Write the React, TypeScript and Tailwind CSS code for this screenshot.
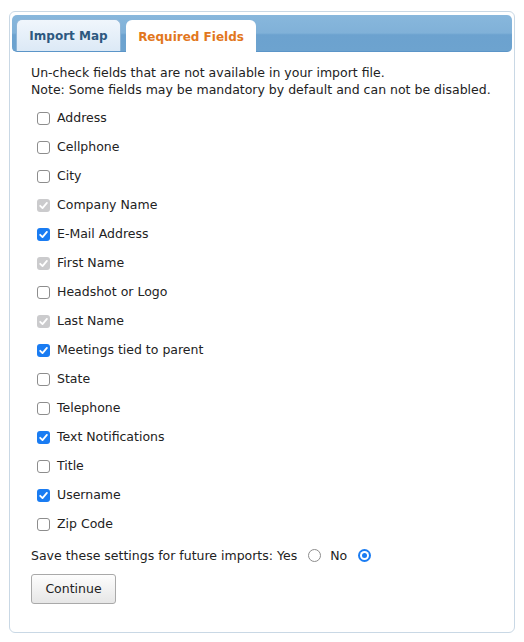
import React from "react";

type State = "off" | "on" | "locked";

const fields: [string, State][] = [
  ["Address", "off"],
  ["Cellphone", "off"],
  ["City", "off"],
  ["Company Name", "locked"],
  ["E-Mail Address", "on"],
  ["First Name", "locked"],
  ["Headshot or Logo", "off"],
  ["Last Name", "locked"],
  ["Meetings tied to parent", "on"],
  ["State", "off"],
  ["Telephone", "off"],
  ["Text Notifications", "on"],
  ["Title", "off"],
  ["Username", "on"],
  ["Zip Code", "off"],
];

function Check() {
  return (
    <svg viewBox="0 0 13 13" className="w-[13px] h-[13px]">
      <path d="M3.2 6.8 L5.5 9.1 L9.9 3.9" fill="none" stroke="white" strokeWidth="1.8" strokeLinecap="round" strokeLinejoin="round" />
    </svg>
  );
}

function Box({ state }: { state: State }) {
  if (state === "off")
    return <span className="w-[13px] h-[13px] rounded-[3px] border border-[#8d8d8d] bg-white shrink-0" />;
  if (state === "on")
    return (
      <span className="w-[13px] h-[13px] rounded-[3px] bg-[#1a7cf2] shrink-0 flex">
        <Check />
      </span>
    );
  return (
    <span className="w-[13px] h-[13px] rounded-[3px] bg-[#cbcbcd] shrink-0 flex">
      <Check />
    </span>
  );
}

export default function App() {
  return (
    <div className="w-[524px] h-[642px] bg-white pt-[11px] pl-[9px] text-[#222] text-[12.5px]" style={{ fontFamily: '"Lucida Grande", "DejaVu Sans", sans-serif' }}>
      <div className="w-[506px] h-[622px] border border-[#c9d8e5] rounded-[6px] p-[2px]">
        <div className="h-[37px] mt-px rounded-[5px] border-b border-[#5b95c8] bg-[linear-gradient(#88b7dc_0%,#80b1d8_50%,#6ca2cf_55%,#6da3cf_100%)] flex items-end pl-[4px] gap-[5px]">
          <div className="w-[105px] h-[32px] pt-px rounded-t-[6px] border border-b-0 border-[#8fb6d8] bg-[linear-gradient(#f0f6fc,#dce9f6)] flex items-center justify-center font-bold text-[#2d5880] text-[12px]">
            Import Map
          </div>
          <div className="w-[130px] h-[32px] pt-px rounded-t-[6px] bg-white flex items-center justify-center font-bold text-[#e2771d] text-[12px] -mb-px">
            Required Fields
          </div>
        </div>
        <div className="pl-[19px] pt-[12px]">
          <div className="leading-[17px]">
            <div>Un-check fields that are not available in your import file.</div>
            <div>Note: Some fields may be mandatory by default and can not be disabled.</div>
          </div>
          <div className="mt-[6px] pl-[6px]">
            {fields.map(([name, state]) => (
              <div key={name} className="h-[29px] flex items-center gap-[7px]">
                <Box state={state} />
                <span>{name}</span>
              </div>
            ))}
          </div>
          <div className="mt-[8px] leading-[17px] flex items-center">
            <span>Save these settings for future imports: Yes</span>
            <span className="ml-[11px] w-[13px] h-[13px] rounded-full border border-[#8d8d8d] bg-white" />
            <span className="ml-[9px]">No</span>
            <span className="ml-[11px] w-[13px] h-[13px] rounded-full bg-[#1a7cf2] flex items-center justify-center">
              <span className="w-[9px] h-[9px] rounded-full bg-white flex items-center justify-center">
                <span className="w-[5px] h-[5px] rounded-full bg-[#1a7cf2]" />
              </span>
            </span>
          </div>
          <button className="mt-[10px] w-[85px] h-[30px] rounded-[3px] border border-[#a9a9a9] bg-[linear-gradient(#fdfdfd,#e6e6e6)] text-[#222] text-[12.5px] flex items-center justify-center">
            Continue
          </button>
        </div>
      </div>
    </div>
  );
}
